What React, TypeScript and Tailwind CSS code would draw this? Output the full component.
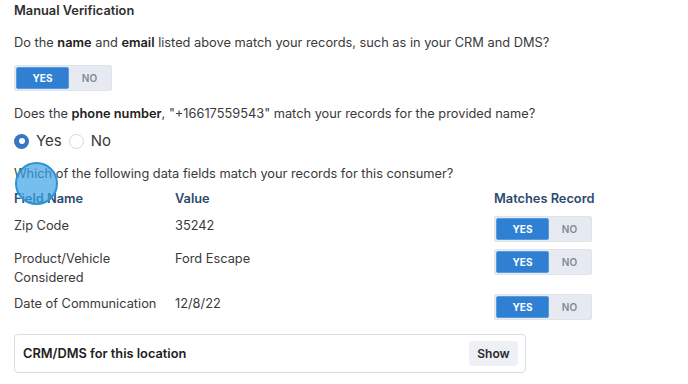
function Toggle() {
  return (
    <div className="flex h-[26px] w-[98px] items-center rounded-[2px] border border-[#dfe3ea] bg-[#e7ebf1] p-px">
      <div className="flex h-full w-[53px] items-center justify-center rounded-[2px] border border-[#5a9be0] bg-[#2f7fd3] text-[10px] font-bold text-white">
        YES
      </div>
      <div className="flex h-full flex-1 items-center justify-center text-[10px] font-semibold text-[#808a97]">NO</div>
    </div>
  );
}

const rows = [
  { name: ['Zip Code'], value: '35242' },
  { name: ['Product/Vehicle', 'Considered'], value: 'Ford Escape' },
  { name: ['Date of Communication'], value: '12/8/22' },
];

export default function App() {
  return (
    <div
      className="relative h-[384px] w-[688px] overflow-hidden bg-white px-[14px] pt-[2px] text-[12.8px] text-[#3a3a3a]"
      style={{ fontFamily: 'Inter, "Noto Sans", sans-serif' }}
    >
      <h3 className="text-[12.8px] leading-[18px] font-semibold text-[#2f2f2f]">Manual Verification</h3>

      <p className="mt-[13px] leading-[20px]">
        Do the <b className="font-semibold text-[#222]">name</b> and <b className="font-semibold text-[#222]">email</b> listed above match your records, such as in your CRM and DMS?
      </p>
      <div className="mt-[12px]">
        <Toggle />
      </div>

      <p className="mt-[13px] leading-[20px]">
        Does the <b className="font-semibold text-[#222]">phone number</b>, "+16617559543" match your records for the provided name?
      </p>
      <div className="mt-[7px] flex h-[20px] items-center text-[15px]">
        <span className="flex h-[15px] w-[15px] items-center justify-center rounded-full bg-[#3577c2]">
          <span className="h-[6px] w-[6px] rounded-full bg-white" />
        </span>
        <span className="ml-[7px]">Yes</span>
        <span className="ml-[7px] h-[15px] w-[15px] rounded-full border border-[#d4d7dc] bg-white" />
        <span className="ml-[7px]">No</span>
      </div>

      <p className="mt-[13px] leading-[20px]">Which of the following data fields match your records for this consumer?</p>

      <div className="mt-[5px] grid grid-cols-[161px_319px_1fr] leading-[20px] font-semibold text-[#2c4a6d]">
        <div>Field Name</div>
        <div>Value</div>
        <div className="whitespace-nowrap">Matches Record</div>
      </div>

      <div className="mt-[7px] flex flex-col gap-[7px]">
        {rows.map((r) => (
          <div key={r.value} className="grid grid-cols-[161px_319px_1fr] items-start leading-[19px]">
            <div>
              {r.name.map((n) => (
                <div key={n}>{n}</div>
              ))}
            </div>
            <div>{r.value}</div>
            <Toggle />
          </div>
        ))}
      </div>

      <div className="mt-[14px] flex h-[39px] w-[512px] items-center justify-between rounded-[4px] border border-[#d9dce1] pr-[7px] pl-[8px]">
        <span className="font-semibold text-[#222]">CRM/DMS for this location</span>
        <button className="h-[25px] w-[49px] rounded-[4px] bg-[#edf0f5] text-[12px] font-semibold text-[#2a2a2a]">Show</button>
      </div>

      <div className="absolute top-[162px] left-[15px] h-[43px] w-[43px] rounded-full border-2 border-[#2d93d6] bg-[#3aa3e6]/70" />
    </div>
  );
}
